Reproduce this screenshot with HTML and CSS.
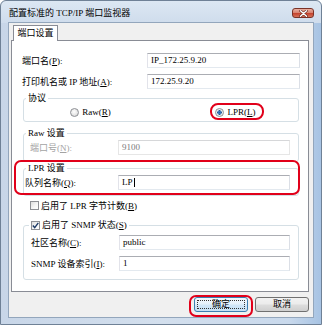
FILE: index.html
```html
<!DOCTYPE html>
<html>
<head>
<meta charset="utf-8">
<link rel="stylesheet" href="styles.css">
</head>
<body>
<div class="window">
  <div class="titlebar">
    <span class="title">配置标准的 TCP/IP 端口监视器</span>
    <span class="close"><svg width="9" height="7" viewBox="0 0 9 7"><path d="M1.5 0.8 L7.5 6.2 M7.5 0.8 L1.5 6.2" stroke="#5a1d15" stroke-width="2.6" stroke-linecap="round"/><path d="M1.5 0.8 L7.5 6.2 M7.5 0.8 L1.5 6.2" stroke="#fff" stroke-width="1.5" stroke-linecap="round"/></svg></span>
  </div>
  <div class="client">
    <div class="tabs"><div class="tab">端口设置</div></div>
    <div class="panel">
      <div class="rows">
        <label>端口名(<u>P</u>):</label><div class="input">IP_172.25.9.20</div>
        <label>打印机名或 IP 地址(<u>A</u>):</label><div class="input">172.25.9.20</div>
      </div>

      <fieldset class="group proto">
        <legend>协议</legend>
        <div class="radios">
          <span class="radio-item"><span class="radio"></span><span>Raw(<u>R</u>)</span></span>
          <span class="radio-item hl"><span class="radio on"></span><span>LPR(<u>L</u>)</span></span>
        </div>
      </fieldset>

      <fieldset class="group raw">
        <legend>Raw 设置</legend>
        <div class="frow raw-row">
          <label class="dis">端口号(<u>N</u>):</label><div class="input disabled">9100</div>
        </div>
      </fieldset>

      <div class="lpr-wrap">
        <fieldset class="group lpr">
          <legend>LPR 设置</legend>
          <div class="frow lpr-row">
            <label>队列名称(<u>Q</u>):</label><div class="input">LP<span class="caret"></span></div>
          </div>
        </fieldset>
      </div>

      <div class="check-row">
        <span class="check"></span><span>启用了 LPR 字节计数(<u>B</u>)</span>
      </div>

      <fieldset class="group snmp">
        <legend><span class="check on"><svg width="7" height="7" viewBox="0 0 7 7"><path d="M0.8 3.6 L2.7 5.6 L6.3 0.9" fill="none" stroke="#1d3a66" stroke-width="1.4"/></svg></span><span>启用了 SNMP 状态(<u>S</u>)</span></legend>
        <div class="frow snmp-row">
          <label>社区名称(<u>C</u>):</label><div class="input">public</div>
          <label>SNMP 设备索引(<u>I</u>):</label><div class="input">1</div>
        </div>
      </fieldset>
    </div>
    <div class="buttons">
      <button class="btn default">确定</button>
      <button class="btn">取消</button>
    </div>
  </div>
</div>
</body>
</html>
```

FILE: styles.css
```css
* { box-sizing: border-box; }
html, body { margin: 0; padding: 0; background: #fff; }
body {
  font-family: "Liberation Serif", "Noto Sans CJK SC", serif;
  font-size: 9px;
  line-height: 10px;
  color: #000;
}
u { text-decoration: underline; }

.window {
  width: 322px;
  height: 325px;
  border: 1px solid #6f8196;
  border-radius: 6px 6px 0 0;
  background:
    linear-gradient(180deg, #dce7f3 0px, #cfdcec 22px, rgba(0,0,0,0) 22px),
    linear-gradient(90deg, #c8d6e8 0%, #d3dfed 50%, #c9d9ec 90%, #a7c3e3 100%);
  display: flex;
  flex-direction: column;
}

.titlebar {
  height: 21px;
  flex: none;
  display: flex;
  align-items: center;
  padding: 3px 7px 0 8px;
}
.title { font-size: 9px; white-space: nowrap; }
.close {
  margin-left: auto;
  width: 22px;
  height: 10px;
  border: 1px solid #7a3227;
  border-radius: 3px;
  background: linear-gradient(180deg, #eab0a2 0%, #d98472 45%, #c5432e 55%, #d4725a 100%);
  display: flex;
  align-items: center;
  justify-content: center;
}
.close svg { display: block; }

.client {
  flex: 1;
  margin: 0 7px 6px 7px;
  background: #f0f0f0;
  border: 1px solid #93a6bc;
  padding: 2px 4px 0 2px;
  display: flex;
  flex-direction: column;
}

.tabs { display: flex; }
.tab {
  margin-left: 2px;
  width: 45px;
  height: 16px;
  margin-bottom: -1px;
  position: relative;
  z-index: 1;
  background: #fff;
  border: 1px solid #898c95;
  border-bottom: none;
  text-align: center;
  line-height: 15px;
}

.panel {
  height: 252px;
  flex: none;
  background: #fff;
  border: 1px solid #898c95;
  padding: 12px 8px 0 10px;
}

.rows {
  display: grid;
  grid-template-columns: 125px 1fr;
  grid-auto-rows: 15px;
  row-gap: 6px;
  align-items: center;
}
label { white-space: nowrap; }

.input {
  height: 15px;
  border: 1px solid;
  border-color: #abadb3 #dbdfe6 #e3e9ef #e2e3ea;
  background: #fff;
  padding-left: 3px;
  line-height: 13px;
  white-space: nowrap;
  display: flex;
  align-items: center;
}
.input.disabled { border-color: #d6d7d9 #e6e6e6 #e6e6e6 #e6e6e6; color: #7a7a7a; }
.dis { color: #a3a3a3; }
.caret { display: inline-block; width: 1px; height: 9px; background: #000; margin-left: 1px; }

.group {
  margin: 4px 1px 0 1px;
  padding: 0;
  border: 1px solid #d5dfe5;
  border-radius: 3px;
  min-width: 0;
}
.group legend {
  padding: 0 2px;
  margin-left: 2px;
  line-height: 10px;
  height: 10px;
}

.radios {
  height: 18px;
  display: grid;
  grid-template-columns: 1fr 1fr;
  align-items: center;
  justify-items: center;
}
.radio-item { display: inline-flex; align-items: center; gap: 3px; position: relative; white-space: nowrap; }
.radio-item:first-child { margin-left: -4px; }
.radio {
  width: 9px;
  height: 9px;
  border-radius: 50%;
  border: 1px solid #8e9095;
  background: radial-gradient(circle at 45% 40%, #ffffff 0%, #e6e6e6 55%, #c9c9c9 100%);
}
.radio.on {
  background: radial-gradient(circle at 50% 50%, #2a63a6 0%, #3d7fc4 30%, #1f4f8a 40%, #d8e4ef 48%, #f4f4f4 70%, #cfcfcf 100%);
}
.hl { margin-left: 12px; }
.hl::after {
  content: "";
  position: absolute;
  left: -5px;
  right: -8px;
  top: -4px;
  bottom: -3px;
  border: 2px solid #e1001a;
  border-radius: 8px;
}

.raw { margin-top: 6px; }
.frow {
  display: grid;
  grid-template-columns: 88px 1fr;
  grid-auto-rows: 15px;
  row-gap: 6px;
  align-items: center;
}
.raw-row { padding: 2px 8px 6px 6px; }

.lpr-wrap { position: relative; margin: 1px 1px 0 1px; }
.lpr-wrap .group { margin: 0; }
.lpr-row { padding: 2px 8px 5px 1px; grid-template-columns: 93px 1fr; }
.lpr-wrap::after {
  content: "";
  position: absolute;
  left: -9px;
  right: -1px;
  top: -3px;
  bottom: 1px;
  border: 2px solid #e1001a;
  border-radius: 7px;
}

.check-row {
  margin-top: 4px;
  padding-left: 8px;
  height: 11px;
  display: flex;
  align-items: center;
  gap: 2px;
}
.check {
  width: 9px;
  height: 9px;
  border: 1px solid #8e9095;
  background: linear-gradient(135deg, #dedede 0%, #f7f7f7 60%, #ffffff 100%);
  display: inline-flex;
  align-items: center;
  justify-content: center;
  flex: none;
}
.check svg { display: block; }

.snmp { margin-top: 9px; }
.snmp legend {
  display: flex;
  align-items: center;
  gap: 2px;
  height: 11px;
  line-height: 11px;
  margin-left: 5px;
}
.snmp-row { padding: 4px 8px 8px 7px; }

.buttons {
  display: flex;
  justify-content: flex-end;
  gap: 7px;
  margin-top: 5px;
}
.btn {
  width: 54px;
  height: 15px;
  border: 1px solid #707070;
  border-radius: 3px;
  background: linear-gradient(180deg, #f2f2f2 0%, #ebebeb 48%, #dddddd 52%, #cfcfcf 100%);
  font-family: "Liberation Serif", "Noto Sans CJK SC", serif;
  font-size: 9px;
  line-height: 13px;
  padding: 0;
  color: #000;
  position: relative;
}
.btn.default {
  border-color: #3c7fb1;
  background: linear-gradient(180deg, #f4f9fd 0%, #e4f1fb 48%, #d3e8f8 52%, #c4e0f5 100%);
}
.btn.default::before {
  content: "";
  position: absolute;
  inset: 2px;
  border: 1px dotted #333;
}
.btn.default::after {
  content: "";
  position: absolute;
  left: -6px;
  right: -6px;
  top: -3px;
  bottom: -6px;
  border: 2px solid #e1001a;
  border-radius: 7px;
}
```
